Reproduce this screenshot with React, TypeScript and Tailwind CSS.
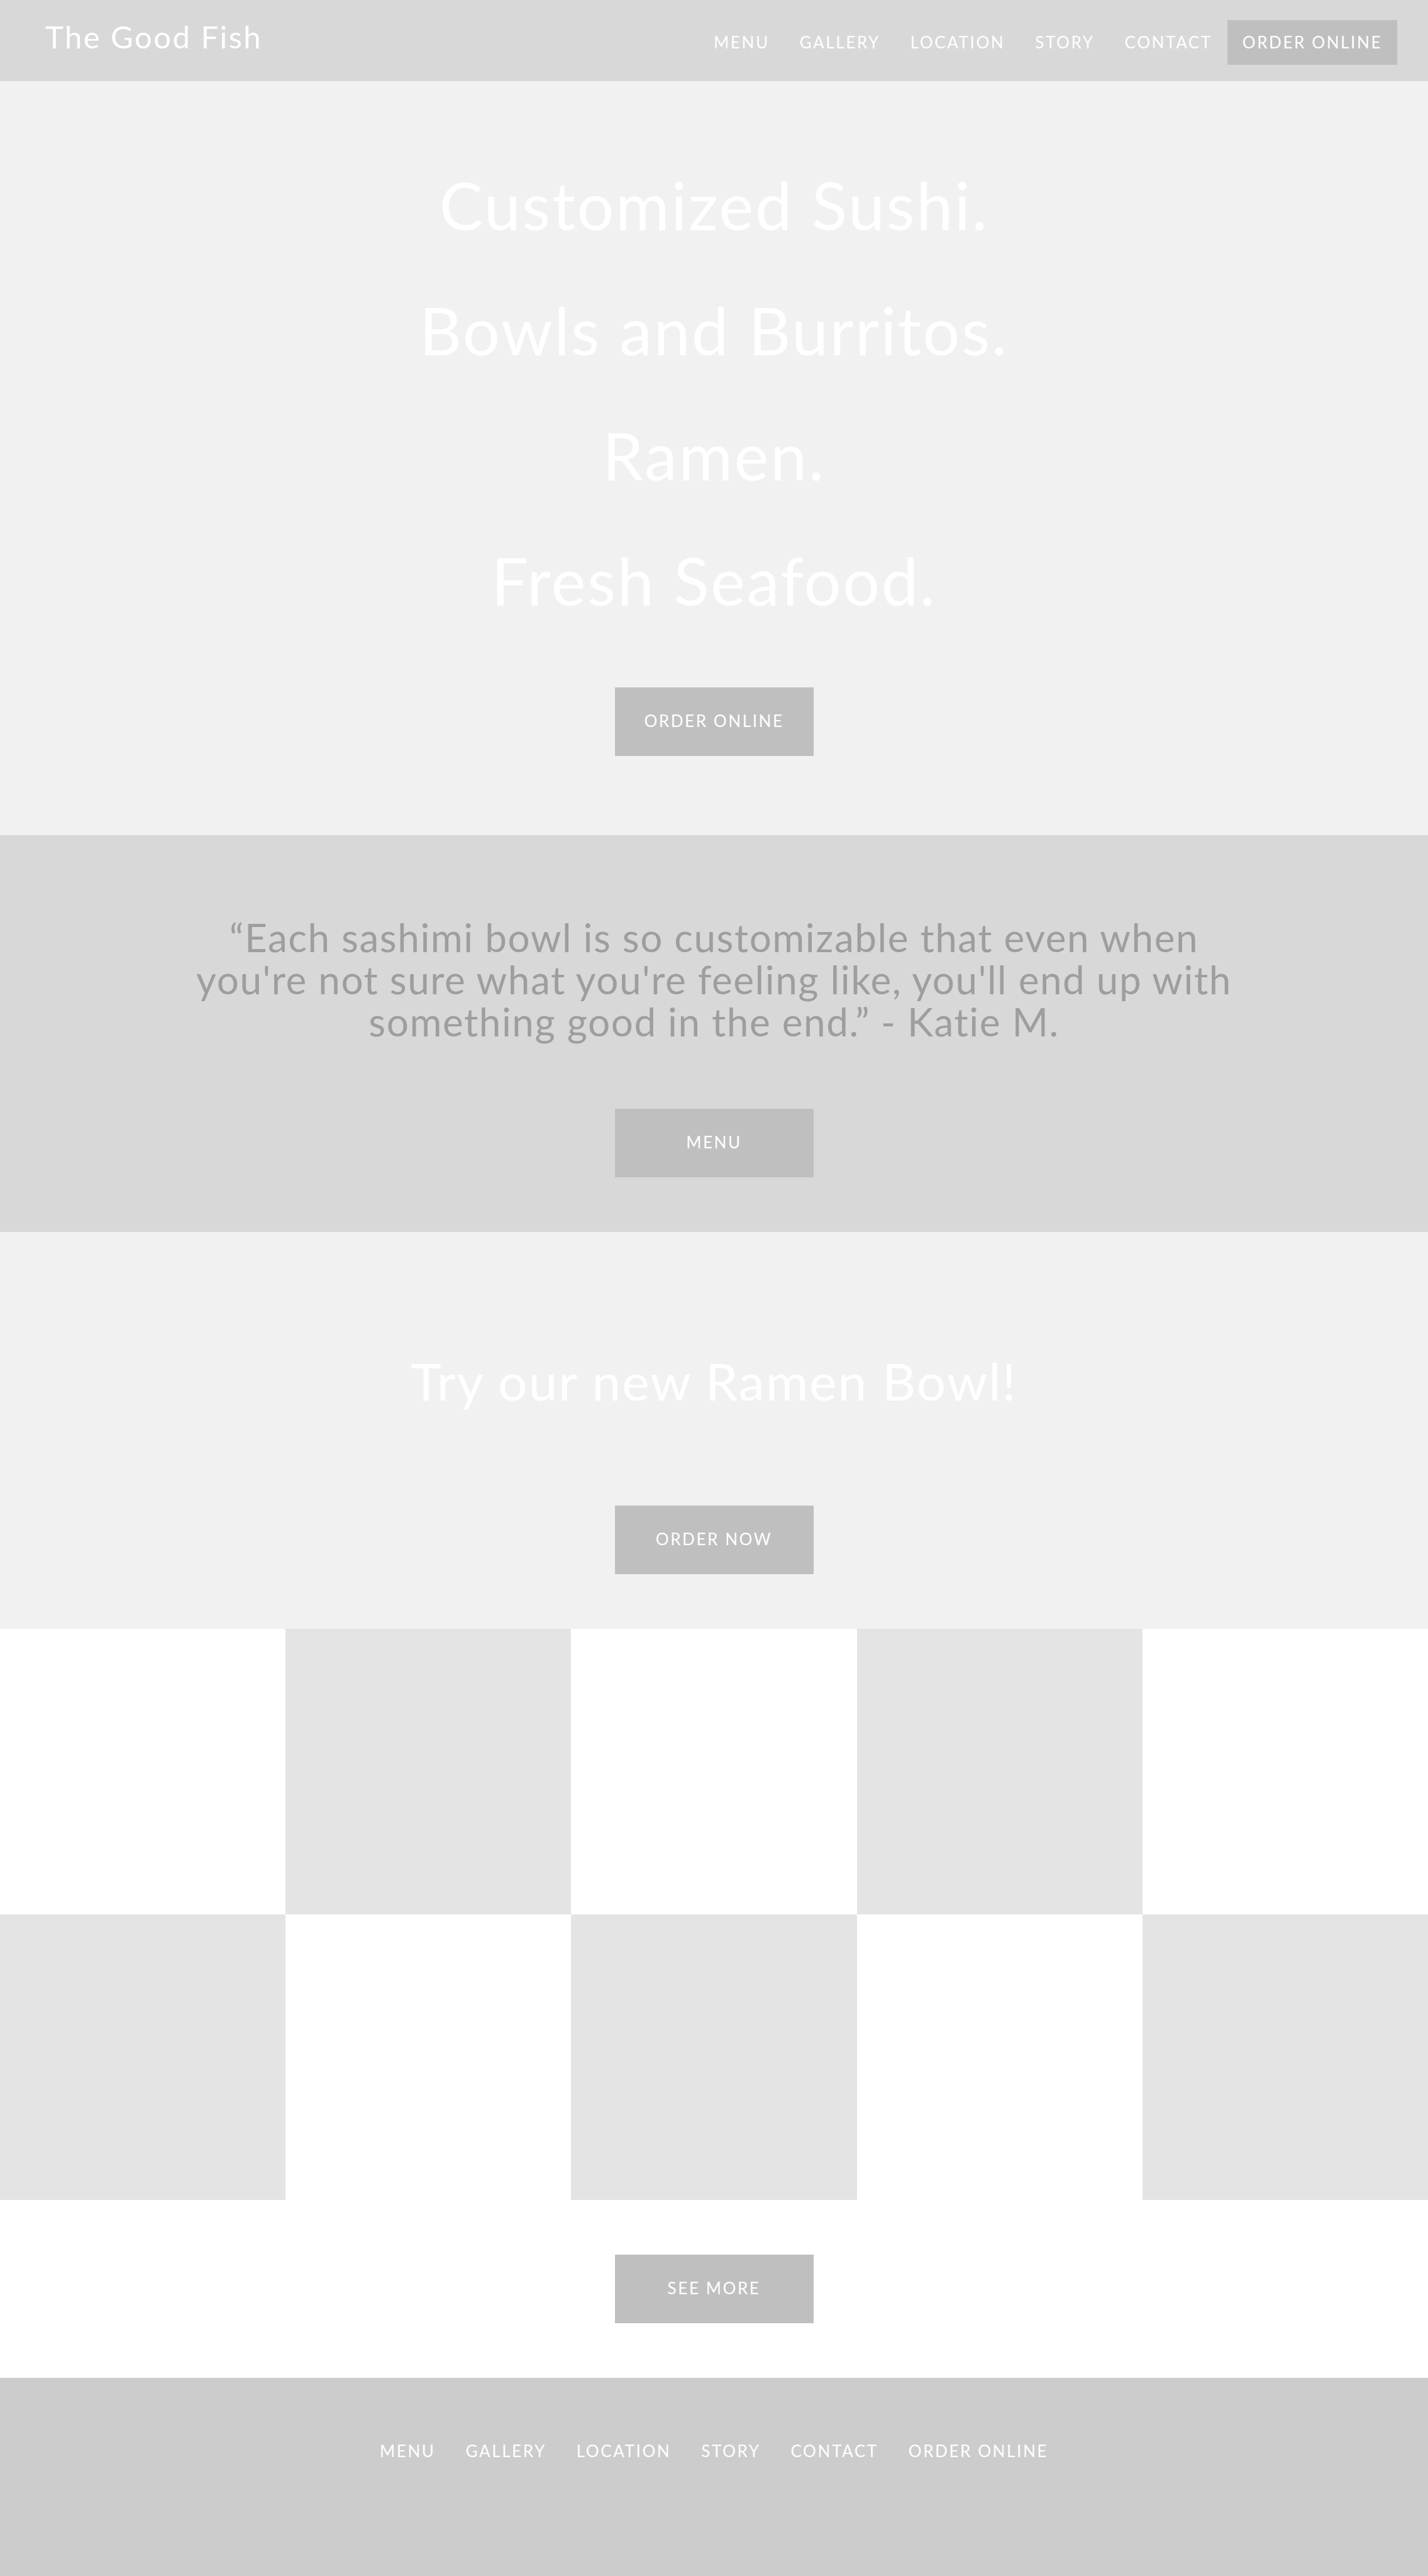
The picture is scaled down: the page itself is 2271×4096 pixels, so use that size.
const pages = ["Menu", "Gallery", "Location", "Story", "Contact"];

const tiles = Array.from({ length: 10 }, (_, i) => i);

function ActionButton({ children }: { children: string }) {
  return (
    <button
      type="button"
      className="flex h-[109px] w-[316px] items-center justify-center bg-[#bfbfbf] pb-1 text-[26px] leading-[30px] tracking-widest text-white uppercase"
    >
      {children}
    </button>
  );
}

export default function App() {
  return (
    <div className="flex min-h-screen flex-col bg-white font-['Lato',sans-serif] text-white">
      <header className="flex h-[129px] items-baseline justify-between bg-[#d8d8d8] pt-8 pr-[49px] pl-[72px]">
        <a href="#home" className="text-[49px] leading-[52px] tracking-wider">
          The Good Fish
        </a>
        <nav
          aria-label="Main"
          className="flex items-baseline text-[26px] leading-[71px] tracking-widest uppercase"
        >
          {pages.map((page) => (
            <a key={page} href={`#${page.toLowerCase()}`} className="px-6">
              {page}
            </a>
          ))}
          <a href="#order" className="bg-[#bfbfbf] px-6">
            Order Online
          </a>
        </nav>
      </header>

      <main>
        <section className="flex flex-col items-center bg-[#f1f1f1] pt-[97px] pb-[126px]">
          <h1 className="mb-[71px] text-center text-[104px] leading-[199px] tracking-wide">
            <span className="block">Customized Sushi.</span>
            <span className="block">Bowls and Burritos.</span>
            <span className="block">Ramen.</span>
            <span className="block">Fresh Seafood.</span>
          </h1>
          <ActionButton>Order Online</ActionButton>
        </section>

        <section className="flex flex-col items-center bg-[#d8d8d8] pt-[129px] pb-[87px]">
          <blockquote className="mb-[105px] max-w-[1720px] text-center text-[62px] leading-[67px] tracking-wide text-[#9e9e9e]">
            “Each sashimi bowl is so customizable that even when you're not sure
            what you're feeling like, you'll end up with something good in the
            end.” - Katie M.
          </blockquote>
          <ActionButton>Menu</ActionButton>
        </section>

        <section className="flex flex-col items-center bg-[#f1f1f1] pt-[187px] pb-[87px]">
          <h2 className="mb-[150px] text-center text-[82px] leading-[98px] tracking-wide">
            Try our new Ramen Bowl!
          </h2>
          <ActionButton>Order Now</ActionButton>
        </section>

        <section aria-label="Gallery" className="flex flex-col items-center pb-[87px]">
          <div className="mb-[87px] grid w-full grid-cols-5">
            {tiles.map((tile) => (
              <div key={tile} className="aspect-square bg-white even:bg-[#e4e4e4]" />
            ))}
          </div>
          <ActionButton>See More</ActionButton>
        </section>
      </main>

      <footer className="flex grow justify-center bg-[#cccccc] pt-[101px] pb-[180px]">
        <nav
          aria-label="Footer"
          className="flex text-[26px] leading-[30px] tracking-widest uppercase"
        >
          {pages.map((page) => (
            <a key={page} href={`#${page.toLowerCase()}`} className="px-6">
              {page}
            </a>
          ))}
          <a href="#order" className="px-6">
            Order Online
          </a>
        </nav>
      </footer>
    </div>
  );
}
